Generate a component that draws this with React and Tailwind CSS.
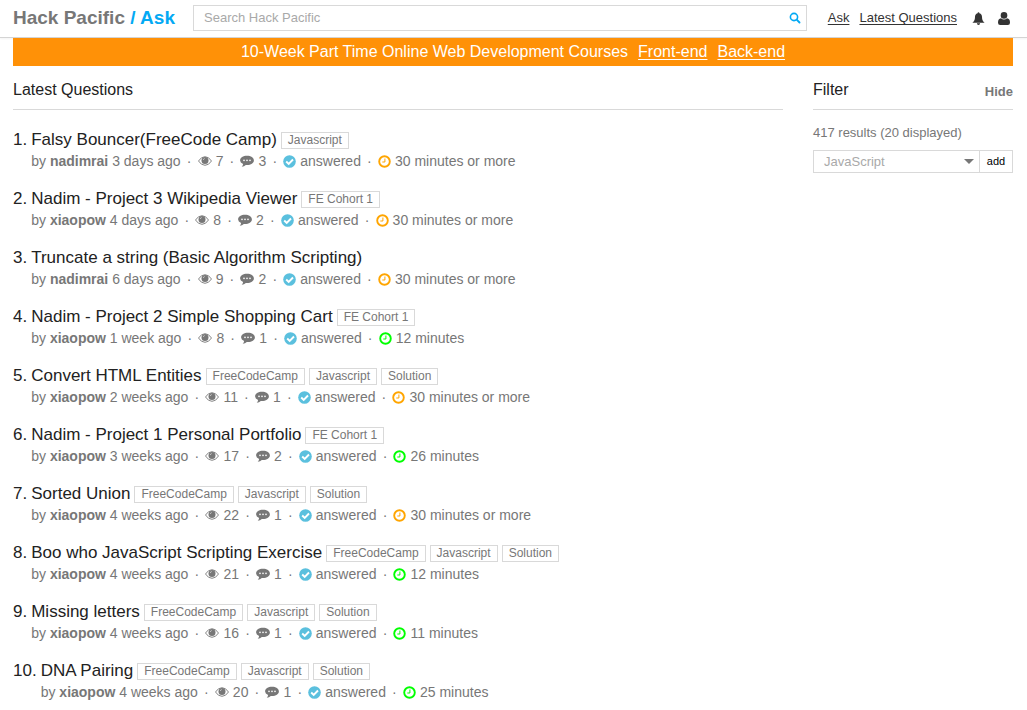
const questions = [
  { id: 1, title: "Falsy Bouncer(FreeCode Camp)", tags: ["Javascript"], user: "nadimrai", ago: "3 days ago", views: 7, comments: 3, time: "30 minutes or more", long: true },
  { id: 2, title: "Nadim - Project 3 Wikipedia Viewer", tags: ["FE Cohort 1"], user: "xiaopow", ago: "4 days ago", views: 8, comments: 2, time: "30 minutes or more", long: true },
  { id: 3, title: "Truncate a string (Basic Algorithm Scripting)", tags: [], user: "nadimrai", ago: "6 days ago", views: 9, comments: 2, time: "30 minutes or more", long: true },
  { id: 4, title: "Nadim - Project 2 Simple Shopping Cart", tags: ["FE Cohort 1"], user: "xiaopow", ago: "1 week ago", views: 8, comments: 1, time: "12 minutes" },
  { id: 5, title: "Convert HTML Entities", tags: ["FreeCodeCamp", "Javascript", "Solution"], user: "xiaopow", ago: "2 weeks ago", views: 11, comments: 1, time: "30 minutes or more", long: true },
  { id: 6, title: "Nadim - Project 1 Personal Portfolio", tags: ["FE Cohort 1"], user: "xiaopow", ago: "3 weeks ago", views: 17, comments: 2, time: "26 minutes" },
  { id: 7, title: "Sorted Union", tags: ["FreeCodeCamp", "Javascript", "Solution"], user: "xiaopow", ago: "4 weeks ago", views: 22, comments: 1, time: "30 minutes or more", long: true },
  { id: 8, title: "Boo who JavaScript Scripting Exercise", tags: ["FreeCodeCamp", "Javascript", "Solution"], user: "xiaopow", ago: "4 weeks ago", views: 21, comments: 1, time: "12 minutes" },
  { id: 9, title: "Missing letters", tags: ["FreeCodeCamp", "Javascript", "Solution"], user: "xiaopow", ago: "4 weeks ago", views: 16, comments: 1, time: "11 minutes" },
  { id: 10, title: "DNA Pairing", tags: ["FreeCodeCamp", "Javascript", "Solution"], user: "xiaopow", ago: "4 weeks ago", views: 20, comments: 1, time: "25 minutes" },
];

const EyeIcon = () => (
  <svg viewBox="0 0 14 12" className="w-3.5 h-3" fill="none" aria-hidden="true">
    <path d="M.5 6Q3.2 1.7 7 1.7T13.5 6Q10.800 10.300 7 10.300T.5 6Z" stroke="currentColor" strokeWidth=".9" />
    <circle cx="7" cy="5.400" r="3.500" fill="currentColor" />
    <path d="M5.300 5Q5.400 3.700 6.800 3.500" stroke="#fff" strokeWidth=".5" />
  </svg>
);

const CommentIcon = () => (
  <svg viewBox="0 0 14 12" className="w-3.5 h-3" aria-hidden="true">
    <path d="M7 .8C10.900.8 13.900 2.800 13.900 5.500S10.900 10 7 10Q6.400 10 5.800 9.900Q4.300 11.600 1.700 11.800Q3 10.600 3.100 9.100Q.1 7.700.1 5.500C.1 2.800 3.100.8 7 .8Z" fill="currentColor" />
    <circle cx="4" cy="5.400" r=".8" fill="#fff" />
    <circle cx="7" cy="5.400" r=".8" fill="#fff" />
    <circle cx="10" cy="5.400" r=".8" fill="#fff" />
  </svg>
);

const CheckIcon = () => (
  <svg viewBox="0 0 13 13" className="w-[13px] h-[13px] text-[#5bc0de]" fill="none" aria-hidden="true">
    <circle cx="6.500" cy="6.500" r="6.300" fill="currentColor" />
    <path d="M3.200 6.500L5.700 9L10 4.500" stroke="#fff" strokeWidth="1.900" />
  </svg>
);

const ClockIcon = ({ long }) => (
  <svg viewBox="0 0 13 13" className={`w-[13px] h-[13px] ${long ? "text-[#ffa500]" : "text-[#00ff00]"}`} fill="none" stroke="currentColor" aria-hidden="true">
    <circle cx="6.500" cy="6.500" r="5.300" strokeWidth="1.900" />
    <path d="M6.900 3.500V7H4.300" strokeWidth="1" />
  </svg>
);

const SearchIcon = () => (
  <svg viewBox="0 0 12 12" className="w-3 h-3" fill="none" stroke="currentColor" aria-hidden="true">
    <circle cx="5" cy="5" r="3.600" strokeWidth="1.600" />
    <path d="M7.700 7.700L10.500 10.500" strokeWidth="1.900" strokeLinecap="round" />
  </svg>
);

const BellIcon = () => (
  <svg viewBox="0 0 13 13" className="w-[13px] h-[13px]" fill="currentColor" aria-hidden="true">
    <path d="M6.500.200C7.100.200 7.400.600 7.400 1.200C9.300 1.700 10 3.300 10 5C10 8 11 9.200 12.600 10.800H.400C2 9.200 3 8 3 5C3 3.300 3.700 1.700 5.600 1.200C5.600.600 5.900.200 6.500.200ZM4.900 11.300H8.100C8 12.300 7.400 12.900 6.500 12.900S5 12.300 4.900 11.300Z" />
  </svg>
);

const UserIcon = () => (
  <svg viewBox="0 0 12 13" className="w-3 h-[13px]" fill="currentColor" aria-hidden="true">
    <circle cx="6" cy="3.400" r="3.300" />
    <path d="M3 6.300Q4.300 7.600 6 7.600T9 6.300Q12 6.600 12 10.700Q12 13 9.800 13H2.200Q0 13 0 10.700Q0 6.600 3 6.300Z" />
  </svg>
);

const Dot = () => <span className="w-[17px] text-center">·</span>;

const Header = () => (
  <header className="border-b border-[#d4d4d4] shadow-xs">
    <div className="flex items-center h-[37px] px-[13px] pr-3.5 pb-px">
      <a href="#" className="w-[180px] shrink-0 text-[19px] leading-6 font-bold text-[#777]">
        Hack Pacific <span className="text-[#03a9f4]">/ Ask</span>
      </a>
      <form className="flex flex-1 items-center h-[26px] border border-[#d9d9d9]">
        <input
          type="text"
          aria-label="Search"
          placeholder="Search Hack Pacific"
          className="flex-1 min-w-0 px-2.5 text-[13px] outline-none placeholder:text-[#a9a9a9]"
        />
        <button type="button" aria-label="Search" className="px-[5px] text-[#03a9f4]">
          <SearchIcon />
        </button>
      </form>
      <nav className="flex items-center gap-2.5 ml-[21px] text-[13px] text-[#333]">
        <a href="#" className="underline underline-offset-2">Ask</a>
        <a href="#" className="underline underline-offset-2">Latest Questions</a>
        <button type="button" aria-label="Notifications" className="ml-[5px]"><BellIcon /></button>
        <button type="button" aria-label="Account" className="mx-[3px]"><UserIcon /></button>
      </nav>
    </div>
  </header>
);

const Question = ({ item }) => (
  <li className="flex gap-1 mb-[15px]">
    <span className="pt-px text-[17px] leading-6 text-[#222]">{item.id}.</span>
    <div>
      <div className="flex items-start gap-1 h-6 pt-px">
        <a href="#" className="text-[17px] leading-6 text-[#222]">{item.title}</a>
        {item.tags.map((tag) => (
          <a key={tag} href="#" className="mt-1 px-1.5 border border-[#d9d9d9] text-xs leading-[15px] text-[#777]">
            {tag}
          </a>
        ))}
      </div>
      <div className="flex items-center text-sm leading-5 text-[#777]">
        <span>by <b>{item.user}</b> {item.ago}</span>
        <Dot />
        <span className="flex items-center gap-1"><EyeIcon />{item.views}</span>
        <Dot />
        <span className="flex items-center gap-1"><CommentIcon />{item.comments}</span>
        <Dot />
        <span className="flex items-center gap-1"><CheckIcon />answered</span>
        <Dot />
        <span className="flex items-center gap-1"><ClockIcon long={item.long} />{item.time}</span>
      </div>
    </div>
  </li>
);

const Filter = () => (
  <aside className="w-[200px] shrink-0">
    <div className="flex items-center justify-between h-11 pt-1 border-b border-[#d9d9d9]">
      <h2 className="text-base text-[#222]">Filter</h2>
      <button type="button" className="mt-1 text-[13px] font-bold text-[#777]">Hide</button>
    </div>
    <p className="mt-[13px] text-[13px] leading-5 text-[#777]">417 results (20 displayed)</p>
    <form className="flex h-[23px] mt-[7px] border border-[#d9d9d9]">
      <div className="relative flex-1">
        <select aria-label="Tag" className="block w-full h-[21px] px-2.5 appearance-none outline-none text-[13px] leading-5 text-[#a9a9a9]">
          <option>JavaScript</option>
        </select>
        <svg viewBox="0 0 10 5" className="absolute right-[5px] top-2 w-2.5 h-[5px] pointer-events-none" fill="#777" aria-hidden="true">
          <path d="M0 0H10L5 5Z" />
        </svg>
      </div>
      <button type="button" className="w-[33px] border-l border-[#d9d9d9] text-[11px] text-black">add</button>
    </form>
  </aside>
);

const App = () => {
  return (
    <div className="min-h-screen bg-white font-['Liberation_Sans',Arial,sans-serif]">
      <Header />
      <div className="px-[13px] pr-3.5">
        <div className="flex items-center justify-center gap-2.5 h-7 bg-[#ff9107] text-base text-white">
          <span>10-Week Part Time Online Web Development Courses</span>
          <a href="#" className="underline underline-offset-2">Front-end</a>
          <a href="#" className="underline underline-offset-2">Back-end</a>
        </div>
        <div className="flex gap-[30px]">
          <main className="flex-1 min-w-0">
            <h1 className="flex items-center h-11 pt-1 border-b border-[#d9d9d9] text-base text-[#222]">Latest Questions</h1>
            <ol className="mt-[17px]">
              {questions.map((item) => (
                <Question key={item.id} item={item} />
              ))}
            </ol>
          </main>
          <Filter />
        </div>
      </div>
    </div>
  );
};

export default App;
